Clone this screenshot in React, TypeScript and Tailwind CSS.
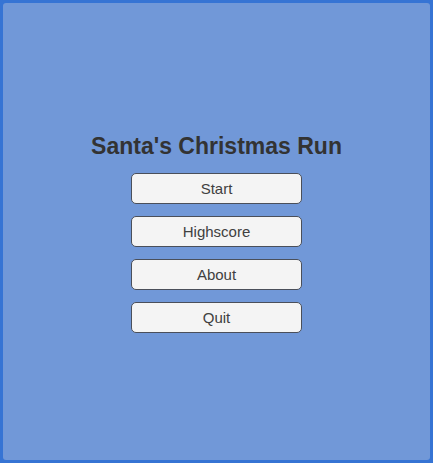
import React from 'react';

const items = ['Start', 'Highscore', 'About', 'Quit'];

export default function App() {
  return (
    <div className="w-[433px] h-[463px] bg-[#3674d4] p-[3px]" style={{ fontFamily: '"Liberation Sans", Arial, sans-serif' }}>
      <div className="w-full h-full bg-[#7198d8] rounded-[3px] flex flex-col items-center pt-[129px]">
        <h1 className="text-[23px] font-bold text-[#333333] leading-[28px]">Santa's Christmas Run</h1>
        <div className="mt-[13px] flex flex-col gap-[12px]">
          {items.map((label) => (
            <button
              key={label}
              className="w-[171px] h-[31px] pt-[2px] bg-[#f4f4f4] border border-[#4a4f5a] rounded-[5px] text-[15px] text-[#404040] flex items-center justify-center"
            >
              {label}
            </button>
          ))}
        </div>
      </div>
    </div>
  );
}
